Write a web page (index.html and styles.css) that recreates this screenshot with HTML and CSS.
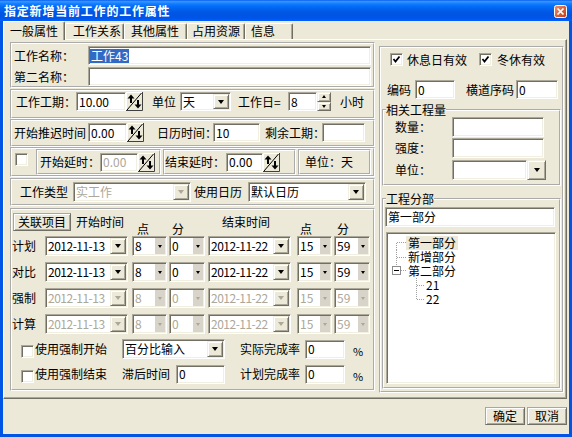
FILE: index.html
```html
<!DOCTYPE html>
<html lang="zh-CN">
<head>
<meta charset="utf-8">
<title>指定新增当前工作的工作属性</title>
<link rel="stylesheet" href="styles.css">
</head>
<body>
<div class="win">
 <div class="titlebar">
  <span class="title">指定新增当前工作的工作属性</span>
  <span class="close"><svg width="13" height="13" viewBox="0 0 13 13"><defs><linearGradient id="cg" x1="0" y1="0" x2="1" y2="1"><stop offset="0" stop-color="#F0906C"/><stop offset="1" stop-color="#C13A12"/></linearGradient></defs><rect x="0.5" y="0.5" width="12" height="12" rx="2" fill="url(#cg)" stroke="#fff"/><path d="M3.5 3.5L9.5 9.5M9.5 3.5L3.5 9.5" stroke="#fff" stroke-width="1.7"/></svg></span>
 </div>
 <div class="frame">
  <div class="tabs">
   <div class="tab sel tab1">一般属性</div>
   <div class="tab tab2">工作关系</div>
   <div class="tab tab3">其他属性</div>
   <div class="tab tab4">占用资源</div>
   <div class="tab tab5">信息</div>
  </div>
  <div class="panel">
   <div class="lcol">
    <div class="box box-name">
     <div class="row h19">
      <span class="lbl name-l">工作名称：</span>
      <div class="sunk inp name-i"><span class="hl">工作43</span></div>
     </div>
     <div class="row h19 gap2">
      <span class="lbl name-l">第二名称：</span>
      <div class="sunk inp name-i"></div>
     </div>
    </div>

    <div class="box box-dur">
     <div class="row h19">
      <span class="lbl dur-l">工作工期：</span>
      <div class="sunk inp dur-i">10.00</div>
      <svg class="spin" width="17" height="19" viewBox="0 0 17 19"><rect width="17" height="19" fill="#ECE9D8"/><path d="M0.5 18V0.5H16" fill="none" stroke="#fff"/><path d="M0 18.5H16.5V0" fill="none" stroke="#404040"/><path d="M15.5 1L1 18" stroke="#000"/><path d="M1.5 6.5L5 2.5L8.5 6.5Z" fill="#000"/><rect x="4" y="6" width="2" height="5" fill="#000"/><path d="M8.5 12.5L12 16.5L15.5 12.5Z" fill="#000"/><rect x="11" y="8" width="2" height="5" fill="#000"/></svg>
      <span class="lbl unit-l">单位</span>
      <div class="sunk combo unit-c"><span class="ctext">天</span><span class="ddb"></span></div>
      <span class="lbl wd-l">工作日=</span>
      <div class="sunk inp wd-i">8</div>
      <div class="ud"><span class="udb up"></span><span class="udb dn"></span></div>
      <span class="lbl hr-l">小时</span>
     </div>
    </div>

    <div class="box box-delay">
     <div class="row h19">
      <span class="lbl dl-l">开始推迟时间</span>
      <div class="sunk inp dl-i">0.00</div>
      <svg class="spin" width="17" height="19" viewBox="0 0 17 19"><rect width="17" height="19" fill="#ECE9D8"/><path d="M0.5 18V0.5H16" fill="none" stroke="#fff"/><path d="M0 18.5H16.5V0" fill="none" stroke="#404040"/><path d="M15.5 1L1 18" stroke="#000"/><path d="M1.5 6.5L5 2.5L8.5 6.5Z" fill="#000"/><rect x="4" y="6" width="2" height="5" fill="#000"/><path d="M8.5 12.5L12 16.5L15.5 12.5Z" fill="#000"/><rect x="11" y="8" width="2" height="5" fill="#000"/></svg>
      <span class="lbl cal-l">日历时间：</span>
      <div class="sunk inp cal-i">10</div>
      <span class="lbl rem-l">剩余工期：</span>
      <div class="sunk inp rem-i"></div>
     </div>
    </div>

    <div class="box box-ext">
     <span class="cb ext-cb"></span>
     <div class="sub sub1">
      <span class="lbl s1-l">开始延时：</span>
      <div class="sunk inp dis s1-i">0.00</div>
      <svg class="spin" width="17" height="19" viewBox="0 0 17 19"><rect width="17" height="19" fill="#ECE9D8"/><path d="M0.5 18V0.5H16" fill="none" stroke="#fff"/><path d="M0 18.5H16.5V0" fill="none" stroke="#404040"/><path d="M15.5 1L1 18" stroke="#000"/><path d="M1.5 6.5L5 2.5L8.5 6.5Z" fill="#000"/><rect x="4" y="6" width="2" height="5" fill="#000"/><path d="M8.5 12.5L12 16.5L15.5 12.5Z" fill="#000"/><rect x="11" y="8" width="2" height="5" fill="#000"/></svg>
     </div>
     <div class="sub sub2">
      <span class="lbl s2-l">结束延时：</span>
      <div class="sunk inp s2-i">0.00</div>
      <svg class="spin" width="17" height="19" viewBox="0 0 17 19"><rect width="17" height="19" fill="#ECE9D8"/><path d="M0.5 18V0.5H16" fill="none" stroke="#fff"/><path d="M0 18.5H16.5V0" fill="none" stroke="#404040"/><path d="M15.5 1L1 18" stroke="#000"/><path d="M1.5 6.5L5 2.5L8.5 6.5Z" fill="#000"/><rect x="4" y="6" width="2" height="5" fill="#000"/><path d="M8.5 12.5L12 16.5L15.5 12.5Z" fill="#000"/><rect x="11" y="8" width="2" height="5" fill="#000"/></svg>
     </div>
     <div class="sub sub3"><span class="lbl">单位：天</span></div>
    </div>

    <div class="box box-type">
     <div class="row h20">
      <span class="lbl ty-l">工作类型</span>
      <div class="sunk combo dis ty-c"><span class="ctext">实工作</span><span class="ddb"></span></div>
      <span class="lbl cal2-l">使用日历</span>
      <div class="sunk combo cal2-c"><span class="ctext">默认日历</span><span class="ddb"></span></div>
     </div>
    </div>

    <div class="box box-time">
     <div class="fhead">
      <span class="btn rel-b">关联项目</span>
      <span class="hd hd-st">开始时间</span>
      <span class="hd hd-low hd-p1">点</span>
      <span class="hd hd-low hd-m1">分</span>
      <span class="hd hd-et">结束时间</span>
      <span class="hd hd-low hd-p2">点</span>
      <span class="hd hd-low hd-m2">分</span>
     </div>

     <div class="row h20 drow first">
      <span class="lbl rl">计划</span>
      <div class="sunk combo dc"><span class="ctext">2012-11-13</span><span class="ddb"></span></div>
      <div class="sunk combo hc hc1"><span class="ctext">8</span><span class="fb"></span></div>
      <div class="sunk combo mc mc1"><span class="ctext">0</span><span class="fb"></span></div>
      <div class="sunk combo dc dc2"><span class="ctext">2012-11-22</span><span class="ddb"></span></div>
      <div class="sunk combo hc hc2"><span class="ctext">15</span><span class="fb"></span></div>
      <div class="sunk combo mc mc2"><span class="ctext">59</span><span class="fb"></span></div>
     </div>
     <div class="row h20 drow">
      <span class="lbl rl">对比</span>
      <div class="sunk combo dc"><span class="ctext">2012-11-13</span><span class="ddb"></span></div>
      <div class="sunk combo hc hc1"><span class="ctext">8</span><span class="fb"></span></div>
      <div class="sunk combo mc mc1"><span class="ctext">0</span><span class="fb"></span></div>
      <div class="sunk combo dc dc2"><span class="ctext">2012-11-22</span><span class="ddb"></span></div>
      <div class="sunk combo hc hc2"><span class="ctext">15</span><span class="fb"></span></div>
      <div class="sunk combo mc mc2"><span class="ctext">59</span><span class="fb"></span></div>
     </div>
     <div class="row h20 drow">
      <span class="lbl rl">强制</span>
      <div class="sunk combo dis dc"><span class="ctext">2012-11-13</span><span class="ddb"></span></div>
      <div class="sunk combo dis hc hc1"><span class="ctext">8</span><span class="fb"></span></div>
      <div class="sunk combo dis mc mc1"><span class="ctext">0</span><span class="fb"></span></div>
      <div class="sunk combo dis dc dc2"><span class="ctext">2012-11-22</span><span class="ddb"></span></div>
      <div class="sunk combo dis hc hc2"><span class="ctext">15</span><span class="fb"></span></div>
      <div class="sunk combo dis mc mc2"><span class="ctext">59</span><span class="fb"></span></div>
     </div>
     <div class="row h20 drow">
      <span class="lbl rl">计算</span>
      <div class="sunk combo dis dc"><span class="ctext">2012-11-13</span><span class="ddb"></span></div>
      <div class="sunk combo dis hc hc1"><span class="ctext">8</span><span class="fb"></span></div>
      <div class="sunk combo dis mc mc1"><span class="ctext">0</span><span class="fb"></span></div>
      <div class="sunk combo dis dc dc2"><span class="ctext">2012-11-22</span><span class="ddb"></span></div>
      <div class="sunk combo dis hc hc2"><span class="ctext">15</span><span class="fb"></span></div>
      <div class="sunk combo dis mc mc2"><span class="ctext">59</span><span class="fb"></span></div>
     </div>

     <div class="row h20 brow">
      <span class="cb b-cb"></span>
      <span class="lbl b-l">使用强制开始</span>
      <div class="sunk combo pct-c"><span class="ctext">百分比输入</span><span class="ddb"></span></div>
      <span class="lbl rate-l">实际完成率</span>
      <div class="sunk inp rate-i">0</div>
      <span class="pc">%</span>
     </div>
     <div class="row h20 brow">
      <span class="cb b-cb"></span>
      <span class="lbl b-l">使用强制结束</span>
      <span class="lbl lag-l">滞后时间</span>
      <div class="sunk inp lag-i">0</div>
      <span class="lbl rate-l">计划完成率</span>
      <div class="sunk inp rate-i">0</div>
      <span class="pc">%</span>
     </div>
    </div>
   </div>

   <div class="rcol">
    <div class="chkrow">
     <span class="cb rc1"><svg width="11" height="11" viewBox="0 0 11 11"><path d="M2.5 5L4.5 7.5L8.5 2.5" fill="none" stroke="#000" stroke-width="1.8"/></svg></span>
     <span class="lbl rl1">休息日有效</span>
     <span class="cb rc2"><svg width="11" height="11" viewBox="0 0 11 11"><path d="M2.5 5L4.5 7.5L8.5 2.5" fill="none" stroke="#000" stroke-width="1.8"/></svg></span>
     <span class="lbl rl2">冬休有效</span>
    </div>
    <div class="row h19 coderow">
     <span class="lbl cd-l">编码</span>
     <div class="sunk inp cd-i">0</div>
     <span class="lbl sq-l">横道序码</span>
     <div class="sunk inp sq-i">0</div>
    </div>
    <fieldset class="grp g1">
     <legend>相关工程量</legend>
     <div class="row h20"><span class="lbl q-l">数量：</span><div class="sunk inp q-i"></div></div>
     <div class="row h20 q2"><span class="lbl q-l">强度：</span><div class="sunk inp q-i"></div></div>
     <div class="row h20 q3"><span class="lbl q-l">单位：</span><div class="sunk inp q-u"></div><span class="ddb q-b"></span></div>
    </fieldset>
    <fieldset class="grp g2">
     <legend>工程分部</legend>
     <div class="sunk inp part-i">第一部分</div>
     <div class="sunk tree">
      <div class="trow t15"><svg class="tl" width="19" height="15" viewBox="0 0 19 15"><path d="M9.5 8V15M10 7.5H19" stroke="#A0A0A0" stroke-dasharray="1 1"/></svg><span class="tn cur">第一部分</span></div>
      <div class="trow"><svg class="tl" width="19" height="14" viewBox="0 0 19 14"><path d="M9.5 0V14M10 7.5H19" stroke="#A0A0A0" stroke-dasharray="1 1"/></svg><span class="tn">新增部分</span></div>
      <div class="trow"><svg class="tl" width="19" height="14" viewBox="0 0 19 14"><path d="M9.5 0V2M14 6.5H19" stroke="#A0A0A0" stroke-dasharray="1 1"/><rect x="5.5" y="2.5" width="8" height="8" fill="#fff" stroke="#8C8C8C"/><path d="M7 6.5H12" stroke="#000"/></svg><span class="tn">第二部分</span></div>
      <div class="trow"><svg class="tl" width="37" height="14" viewBox="0 0 37 14"><path d="M29.5 0V14M30 7.5H37" stroke="#A0A0A0" stroke-dasharray="1 1"/></svg><span class="tn">21</span></div>
      <div class="trow"><svg class="tl" width="37" height="14" viewBox="0 0 37 14"><path d="M29.5 0V7M30 7.5H37" stroke="#A0A0A0" stroke-dasharray="1 1"/></svg><span class="tn">22</span></div>
     </div>
    </fieldset>
   </div>
  </div>
  <div class="btns">
   <span class="btn okb">确定</span>
   <span class="btn okb">取消</span>
  </div>
 </div>
</div>
</body>
</html>
```
FILE: styles.css
```css
* { box-sizing: border-box; margin: 0; padding: 0; }
html, body { margin: 0; padding: 0; background: #ECE9D8; }
body {
  font-family: "Noto Sans CJK SC", "Noto Sans", sans-serif;
  font-size: 12px;
  line-height: 14px;
  color: #000;
}
svg { display: block; flex: none; }

.win {
  width: 572px; height: 437px;
  display: flex; flex-direction: column;
  background: #ECE9D8; overflow: hidden;
}
.titlebar {
  flex: none; height: 21px;
  display: flex; align-items: center; justify-content: space-between;
  padding: 0 5px 0 4px;
  background: linear-gradient(180deg, #0058EE 0%, #3A93FF 6%, #288EFF 11%, #127DFF 18%, #036FFC 28%, #0262EE 42%, #0057E5 58%, #0054E3 75%, #0055EB 88%, #005BF5 94%, #0061FC 100%);
}
.title { color: #fff; font-weight: 700; letter-spacing: 0.8px; white-space: nowrap; }
.close { display: flex; margin-top: 1px; }

.frame {
  flex: 1; display: flex; flex-direction: column;
  border: 3px solid #0055E5; border-top: 0;
}

/* tabs */
.tabs { flex: none; height: 18px; display: flex; align-items: flex-end; }
.tab {
  flex: none; height: 16px; white-space: nowrap;
  border-top: 1px solid #fff; border-left: 1px solid #fff; border-right: 1px solid #716F64;
  box-shadow: inset -1px 0 #ACA899;
  border-radius: 2px 2px 0 0;
}
.tab.sel { height: 19px; padding-top: 2px; margin-bottom: -1px; position: relative; z-index: 1; background: #ECE9D8; }
.tab1 { width: 62px; padding-left: 6px; }
.tab2 { width: 59px; padding-left: 7px; }
.tab3 { width: 63px; padding-left: 6px; }
.tab4 { width: 58px; padding-left: 4px; }
.tab5 { width: 48px; padding-left: 5px; }

.panel {
  flex: none; width: 564px; height: 360px;
  display: flex; align-items: flex-start;
  padding: 2px 0 0 6px;
  border-top: 1px solid #fff; border-left: 1px solid #fff;
  border-right: 1px solid #716F64; border-bottom: 1px solid #716F64;
  box-shadow: inset -1px -1px #ACA899;
}

/* generic */
.row { display: flex; align-items: center; }
.row > * { flex: none; }
.h19 { height: 19px; }
.h20 { height: 20px; }
.gap2 { margin-top: 2px; }
.lbl { white-space: nowrap; }

.sunk {
  background: #fff;
  border: 1px solid; border-color: #ACA899 #fff #fff #ACA899;
  box-shadow: inset 1px 1px #716F64, inset -1px -1px #F1EFE2;
}
.inp { height: 19px; padding-left: 2px; display: flex; align-items: center; white-space: nowrap; overflow: hidden; }
.combo { display: flex; align-items: stretch; white-space: nowrap; overflow: hidden; }
.ctext { flex: 1; display: flex; align-items: center; padding-left: 2px; overflow: hidden; }
.ddb {
  flex: none; width: 16px; margin: 1px;
  display: flex; align-items: center; justify-content: center;
  background: #ECE9D8;
  border: 1px solid; border-color: #F1EFE2 #716F64 #716F64 #F1EFE2;
  box-shadow: inset 1px 1px #fff, inset -1px -1px #ACA899;
}
.ddb::after {
  content: ""; width: 0; height: 0;
  border-left: 3.5px solid transparent; border-right: 3.5px solid transparent;
  border-top: 4px solid #000;
}
.fb {
  flex: none; width: 11px; margin: 1px 1px 1px 0;
  display: flex; align-items: center; justify-content: center;
  background: #D8D4C9; border-left: 1px solid #fff;
}
.fb::after {
  content: ""; width: 0; height: 0;
  border-left: 2.5px solid transparent; border-right: 2.5px solid transparent;
  border-top: 3px solid #000;
}
.dis { color: #ACA899; }
.dis .ddb::after, .dis .fb::after { border-top-color: #ACA899; }

.hl { background: #316AC5; color: #fff; margin-left: -1px; padding: 0 1px; }

.ud { flex: none; width: 14px; height: 19px; display: flex; flex-direction: column; }
.udb {
  flex: 1; display: flex; align-items: center; justify-content: center;
  background: #ECE9D8;
  border: 1px solid; border-color: #F1EFE2 #716F64 #716F64 #F1EFE2;
  box-shadow: inset 1px 1px #fff, inset -1px -1px #ACA899;
}
.udb.up::after { content: ""; border-left: 2.5px solid transparent; border-right: 2.5px solid transparent; border-bottom: 3px solid #000; }
.udb.dn::after { content: ""; border-left: 2.5px solid transparent; border-right: 2.5px solid transparent; border-top: 3px solid #000; }

.cb {
  flex: none; width: 13px; height: 13px; display: flex;
  background: #fff;
  border: 1px solid; border-color: #ACA899 #fff #fff #ACA899;
  box-shadow: inset 1px 1px #716F64, inset -1px -1px #F1EFE2;
}

.btn {
  flex: none; display: flex; align-items: center; justify-content: center;
  white-space: nowrap; background: #ECE9D8;
  border: 1px solid; border-color: #ACA899 #716F64 #716F64 #ACA899;
  box-shadow: inset 1px 1px #fff, inset -1px -1px #ACA899;
}

/* left column */
.lcol { flex: none; width: 365px; display: flex; flex-direction: column; }
.box { flex: none; border: 2px groove #fff; }
.box-name { height: 46px; padding-top: 2px; }
.box-dur { height: 30px; margin-top: 1px; padding-top: 1px; }
.box-delay { height: 28px; padding-top: 2px; }
.box-ext { height: 30px; display: flex; align-items: stretch; }
.box-type { height: 28px; margin-top: 1px; padding-top: 2px; }
.box-time { height: 183px; margin-top: 2px; }

.name-l { margin-left: 2px; width: 74px; }
.name-i { width: 283px; }

.dur-l { margin-left: 4px; width: 60px; }
.dur-i { width: 50px; }
.unit-l { margin-left: 9px; width: 24px; }
.unit-c { margin-left: 4px; width: 51px; height: 19px; }
.wd-l { margin-left: 7px; width: 50px; }
.wd-i { width: 29px; }
.hr-l { margin-left: 9px; }

.dl-l { margin-left: 2px; width: 74px; }
.dl-i { width: 39px; }
.cal-l { margin-left: 13px; width: 56px; }
.cal-i { width: 47px; }
.rem-l { margin-left: 5px; width: 57px; }
.rem-i { width: 43px; }

.ext-cb { margin: 4px 0 0 3px; align-self: flex-start; }
.sub { flex: none; border: 2px groove #fff; display: flex; align-items: center; }
.sub > * { flex: none; }
.sub1 { margin-left: 8px; width: 125px; }
.sub2 { margin-left: 2px; width: 133px; }
.sub3 { margin-left: 2px; width: 73px; padding-left: 5px; }
.s1-l { margin-left: 2px; width: 60px; }
.s1-i { width: 38px; }
.s2-l { width: 61px; }
.s2-i { width: 37px; }

.ty-l { margin-left: 8px; width: 53px; }
.ty-c { width: 118px; height: 20px; }
.cal2-l { margin-left: 3px; width: 54px; }
.cal2-c { width: 118px; height: 20px; }

.fhead { display: flex; align-items: flex-start; height: 20px; margin-top: 3px; }
.fhead > * { flex: none; }
.rel-b { margin-left: 1px; width: 58px; height: 18px; }
.hd { margin-top: 2px; white-space: nowrap; }
.hd-low { margin-top: 9px; }
.hd-st { margin-left: 5px; }
.hd-p1 { margin-left: 13px; }
.hd-m1 { margin-left: 23px; }
.hd-et { margin-left: 38px; }
.hd-p2 { margin-left: 30px; }
.hd-m2 { margin-left: 25px; }

.drow { margin-top: 6px; }
.drow.first { margin-top: 3px; }
.rl { width: 33px; }
.dc { width: 83px; height: 20px; }
.dc .ctext { letter-spacing: -0.5px; }
.hc { width: 35px; height: 20px; }
.mc { width: 36px; height: 20px; }
.hc1 { margin-left: 4px; }
.mc1 { margin-left: 2px; }
.dc2 { margin-left: 3px; }
.hc2 { margin-left: 6px; }
.mc2 { margin-left: 2px; }

.brow { margin-top: 5px; }
.b-cb { margin: 4px 0 0 9px; }
.b-l { margin-left: 1px; width: 72px; }
.pct-c { margin-left: 15px; width: 103px; height: 20px; }
.rate-l { margin-left: 15px; width: 60px; }
.rate-i { margin-left: 5px; width: 40px; }
.lag-l { margin-left: 15px; width: 54px; }
.lag-i { width: 49px; }
.pc { margin-left: 8px; font-size: 11px; padding-top: 3px; }

/* right column */
.rcol {
  flex: none; width: 185px; height: 347px;
  margin: 4px 0 0 4px;
  border: 2px groove #fff;
  display: flex; flex-direction: column;
}
.rcol > * { flex: none; }
.chkrow { display: flex; align-items: center; height: 13px; margin-top: 5px; }
.chkrow > * { flex: none; }
.rc1 { margin-left: 9px; }
.rl1 { margin-left: 4px; width: 60px; }
.rc2 { margin-left: 12px; }
.rl2 { margin-left: 5px; }
.coderow { margin-top: 14px; }
.cd-l { margin-left: 6px; width: 24px; }
.cd-i { margin-left: 4px; width: 40px; }
.sq-l { margin-left: 11px; width: 48px; }
.sq-i { margin-left: 2px; width: 42px; }

.grp { border: 2px groove #fff; min-width: 0; padding: 0; margin: 0; }
.grp legend { margin-left: 2px; padding: 0; line-height: 14px; }
.g1 { margin: 4px 0 0 1px; width: 179px; padding-bottom: 4px; }
.q-l { margin-left: 11px; width: 57px; }
.q-i { width: 92px; height: 20px; }
.q2 { margin-top: 1px; }
.q3 { margin-top: 2px; }
.q-u { width: 75px; height: 20px; }
.q-b { width: 19px; height: 20px; margin: 0; }

.g2 { margin: 6px 0 0 1px; width: 179px; padding-bottom: 3px; }
.part-i { margin: 1px 0 0 1px; width: 170px; height: 20px; }
.tree { margin: 5px 0 0 2px; width: 170px; height: 152px; padding-top: 2px; }
.trow { display: flex; align-items: center; height: 14px; }
.trow.t15 { height: 15px; }
.tl { shape-rendering: crispEdges; }
.tn { padding: 0 2px; line-height: 14px; white-space: nowrap; }
.tn.cur { background: #ECE9D8; }

/* dialog buttons */
.btns { flex: none; display: flex; justify-content: flex-end; gap: 2px; margin-top: 8px; padding-right: 2px; }
.okb { width: 40px; height: 18px; }
```
